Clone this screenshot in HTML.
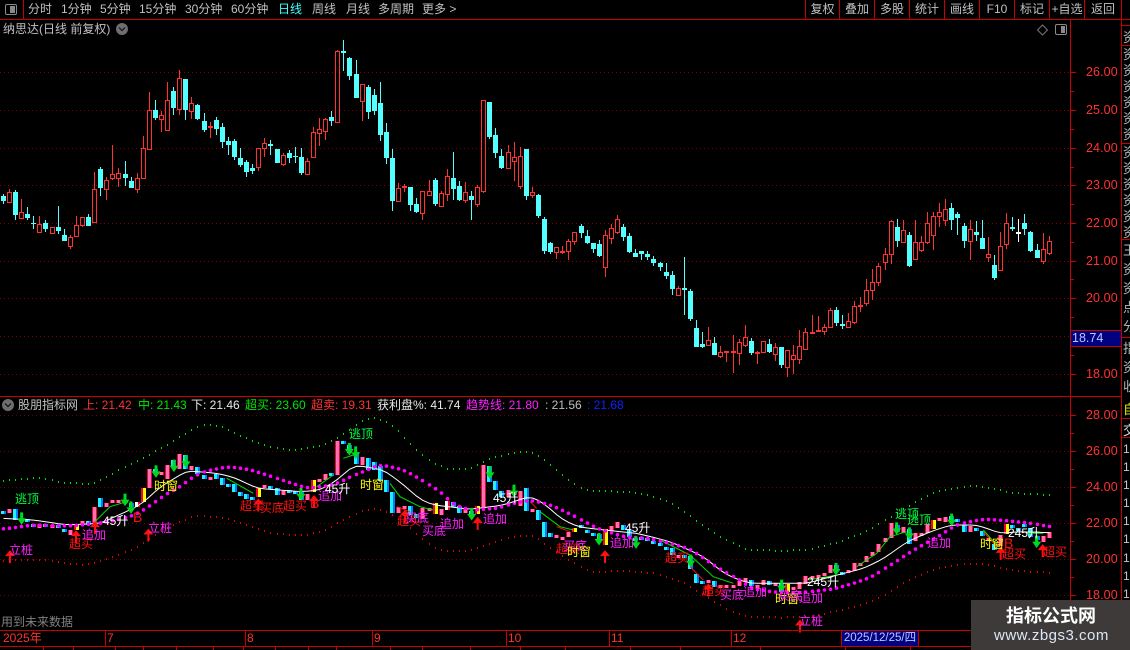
<!DOCTYPE html>
<html lang="zh"><head><meta charset="utf-8"><title>纳思达</title>
<style>
html,body{margin:0;padding:0;background:#000}
#p{position:relative;width:1130px;height:650px;overflow:hidden;background:#000;font-family:"Liberation Sans","WenQuanYi Zen Hei","Noto Sans CJK SC",sans-serif;font-size:12px;color:#c0c0c0}
.t{position:absolute;white-space:nowrap;line-height:14px}
.a{position:absolute;white-space:nowrap;line-height:14px;left:1086px;color:#ff3232;font-size:12.5px;letter-spacing:.1px}
.b{position:absolute;top:2px;text-align:center;line-height:14px;white-space:nowrap}
.r{color:#ff3232}.g{color:#00e800}.w{color:#e8e8e8}.m{color:#ff20ff}.l{color:#1020ff}
svg{position:absolute;left:0;top:0}
svg text{font-family:"Liberation Sans","WenQuanYi Zen Hei","Noto Sans CJK SC",sans-serif;font-size:12px}
.s{position:absolute;left:1123px;width:7px;overflow:hidden;white-space:nowrap;font-size:13px;color:#b8b8b8}
.s div{height:var(--h)}
#wm{position:absolute;left:971px;top:600px;width:159px;height:50px;background:#3d3a39}
</style></head><body><div id="p">
<svg width="1130" height="650" viewBox="0 0 1130 650">
<g stroke="#8a0000" stroke-width="1" stroke-dasharray="1 3" shape-rendering="crispEdges">
<path d="M0 72.5H1070M0 110.5H1070M0 148.5H1070M0 185.5H1070M0 223.5H1070M0 261.5H1070M0 298.5H1070M0 336.5H1070M0 374.5H1070"/>
<path stroke="#6a0000" d="M0 415.5H1070M0 451.5H1070M0 487.5H1070M0 523.5H1070M0 559.5H1070M0 595.5H1070"/>
</g>
<g id="tp"></g><g id="bars"></g><g id="curves"></g>
<g id="arrows"></g>
<g>
<text x="15" y="503" fill="#00ff40">逃顶</text>
<text x="9" y="554" fill="#ff20ff">立桩</text>
<text x="69" y="548" fill="#ff1010">超买</text>
<text x="82" y="539" fill="#ff20ff">追加</text>
<text x="103" y="525" fill="#fff">45升</text>
<text x="133" y="522" fill="#ff1010" style="font-size:14px">B</text>
<text x="148" y="532" fill="#ff20ff">立桩</text>
<text x="154" y="490" fill="#ffff00">时窗</text>
<text x="240" y="510" fill="#ff1010">超买</text>
<text x="260" y="512" fill="#ff1010">买底</text>
<text x="283" y="510" fill="#ff1010">超买</text>
<text x="310" y="508" fill="#ff1010" style="font-size:14px">B</text>
<text x="318" y="500" fill="#ff20ff">追加</text>
<text x="325" y="493" fill="#fff">45升</text>
<text x="349" y="438" fill="#00ff40">逃顶</text>
<text x="360" y="489" fill="#ffff00">时窗</text>
<text x="397" y="525" fill="#ff1010">超买</text>
<text x="405" y="522" fill="#ff20ff">买底</text>
<text x="422" y="535" fill="#ff20ff">买底</text>
<text x="440" y="528" fill="#ff20ff">追加</text>
<text x="493" y="502" fill="#fff">45升</text>
<text x="483" y="523" fill="#ff20ff">追加</text>
<text x="556" y="553" fill="#ff1010">超买</text>
<text x="563" y="550" fill="#ff20ff">买底</text>
<text x="567" y="556" fill="#ffff00">时窗</text>
<text x="610" y="547" fill="#ff20ff">追加</text>
<text x="625" y="532" fill="#fff">45升</text>
<text x="665" y="562" fill="#ff1010">超买</text>
<text x="702" y="595" fill="#ff1010">超买</text>
<text x="720" y="599" fill="#ff20ff">买底</text>
<text x="743" y="596" fill="#ff20ff">追加</text>
<text x="775" y="603" fill="#ffff00">时窗</text>
<text x="778" y="600" fill="#ff20ff">买底</text>
<text x="799" y="602" fill="#ff20ff">追加</text>
<text x="807" y="586" fill="#fff">245升</text>
<text x="799" y="625" fill="#ff20ff">立桩</text>
<text x="895" y="518" fill="#00ff40">逃顶</text>
<text x="907" y="524" fill="#00ff40">逃顶</text>
<text x="927" y="547" fill="#ff20ff">追加</text>
<text x="980" y="548" fill="#ffff00">时窗</text>
<text x="1004" y="548" fill="#ff1010" style="font-size:14px">B</text>
<text x="1002" y="558" fill="#ff1010">超买</text>
<text x="1008" y="537" fill="#fff">245升</text>
<text x="1043" y="556" fill="#ff1010">超买</text>
</g>
<g stroke="#c80000" stroke-width="1" shape-rendering="crispEdges" fill="none">
<path d="M0 19.5H1130M0 396.5H1121M0 630.5H971M0 646.5H971M1070.5 19V650M1121.5 0V650M23.5 0V19M805.5 0V19M839.5 0V19M874.5 0V19M909.5 0V19M944.5 0V19M979.5 0V19M1014.5 0V19M1049.5 0V19M1084.5 0V19"/>
<path d="M1122 25.5H1130M1122 45.5H1130M1122 143.5H1130M1122 239.5H1130M1122 337.5H1130M1122 418.5H1130M1122 437.5H1130"/>
<path d="M105.5 630V646M245.5 630V646M372.5 630V646M506.5 630V646M609.5 630V646M731.5 630V646"/>
<path d="M43.5 646V650M73.5 646V650M115.5 646V650M143.5 646V650M176.5 646V650M213.5 646V650M243.5 646V650M275.5 646V650M308.5 646V650M336.5 646V650M390.5 646V650M422.5 646V650M470.5 646V650M520.5 646V650M565.5 646V650M630.5 646V650M680.5 646V650M760.5 646V650M845.5 646V650M910.5 646V650"/>
<path d="M1071 72.5H1076M1071 91.5H1074M1071 110.5H1076M1071 129.5H1074M1071 148.5H1076M1071 167.5H1074M1071 185.5H1076M1071 204.5H1074M1071 223.5H1076M1071 242.5H1074M1071 261.5H1076M1071 279.5H1074M1071 298.5H1076M1071 317.5H1074M1071 336.5H1076M1071 355.5H1074M1071 374.5H1076"/>
<path d="M1071 415.5H1076M1071 433.5H1074M1071 451.5H1076M1071 469.5H1074M1071 487.5H1076M1071 505.5H1074M1071 523.5H1076M1071 541.5H1074M1071 559.5H1076M1071 577.5H1074M1071 595.5H1076"/>
</g>
<rect x="5.5" y="4.5" width="11" height="10" rx="1.5" fill="none" stroke="#8a8a8a"/><rect x="10" y="6" width="5" height="7" fill="#8a8a8a"/>
<circle cx="122" cy="29" r="6" fill="#6e6e6e"/><path d="M119 27.5l3 3 3-3" fill="none" stroke="#111" stroke-width="1.2"/>
<circle cx="8" cy="405" r="6" fill="#6e6e6e"/><path d="M5 403.5l3 3 3-3" fill="none" stroke="#111" stroke-width="1.2"/>
<path d="M1042.5 25l5 5-5 5-5-5z" fill="none" stroke="#777"/>
<rect x="1055.5" y="24.5" width="11" height="10" rx="1.5" fill="none" stroke="#8a8a8a"/><rect x="1061" y="26" width="4" height="7" fill="#8a8a8a"/>
</svg>

<span class="t" style="left:28px;top:2px">分时</span>
<span class="t" style="left:61px;top:2px">1分钟</span>
<span class="t" style="left:100px;top:2px">5分钟</span>
<span class="t" style="left:139px;top:2px">15分钟</span>
<span class="t" style="left:185px;top:2px">30分钟</span>
<span class="t" style="left:231px;top:2px">60分钟</span>
<span class="t" style="left:278px;top:2px;color:#40ffff">日线</span>
<span class="t" style="left:312px;top:2px">周线</span>
<span class="t" style="left:346px;top:2px">月线</span>
<span class="t" style="left:378px;top:2px">多周期</span>
<span class="t" style="left:422px;top:2px">更多 &gt;</span>
<span class="b" style="left:806px;width:33px">复权</span>
<span class="b" style="left:840px;width:34px">叠加</span>
<span class="b" style="left:875px;width:34px">多股</span>
<span class="b" style="left:910px;width:34px">统计</span>
<span class="b" style="left:945px;width:34px">画线</span>
<span class="b" style="left:980px;width:34px">F10</span>
<span class="b" style="left:1015px;width:34px">标记</span>
<span class="b" style="left:1050px;width:34px">+自选</span>
<span class="b" style="left:1085px;width:36px">返回</span>
<span class="t" style="left:3px;top:22px">纳思达(日线 前复权)</span>

<span class="a" style="top:65px">26.00</span>
<span class="a" style="top:103px">25.00</span>
<span class="a" style="top:141px">24.00</span>
<span class="a" style="top:178px">23.00</span>
<span class="a" style="top:216px">22.00</span>
<span class="a" style="top:254px">21.00</span>
<span class="a" style="top:291px">20.00</span>
<span class="a" style="top:367px">18.00</span>
<div style="position:absolute;left:1071px;top:330px;width:50px;height:15px;background:#000080;border-top:1px solid #c80000;border-bottom:1px solid #c80000"></div>
<span class="t" style="left:1072px;top:331px;color:#b8c8ff;font-size:12.5px">18.74</span>

<span class="a" style="top:408px">28.00</span>
<span class="a" style="top:444px">26.00</span>
<span class="a" style="top:480px">24.00</span>
<span class="a" style="top:516px">22.00</span>
<span class="a" style="top:552px">20.00</span>
<span class="a" style="top:588px">18.00</span>

<div class="s" style="top:27px;--h:16px">资</div>
<div class="s" style="top:47px;--h:16px;line-height:16px"><div>资</div><div>资</div><div>资</div><div>资</div><div>资</div><div>资</div></div>
<div class="s" style="top:145px;--h:16px;line-height:16px"><div>资</div><div>资</div><div>资</div><div>资</div><div>资</div><div>资</div></div>
<div class="s" style="top:241px;--h:19px;line-height:19px"><div>王</div><div>资</div><div>资</div><div>点</div><div>分</div></div>
<div class="s" style="top:339px;--h:19px;line-height:19px"><div>指</div><div>资</div><div>收</div></div>
<div class="s" style="top:399px;color:#e8e800">自</div>
<div class="s" style="top:420px;color:#d8d8d8">交</div>
<div class="s" style="top:440px;--h:18.1px;line-height:18px;font-size:12px;color:#c8c8c8"><div>1</div><div>1</div><div>1</div><div>1</div><div>1</div><div>1</div><div>1</div><div>1</div><div>1</div></div>

<span class="t" style="left:18px;top:398px">股朋指标网</span>
<span class="t r" style="left:83px;top:398px">上: 21.42</span>
<span class="t g" style="left:138px;top:398px">中: 21.43</span>
<span class="t w" style="left:191px;top:398px">下: 21.46</span>
<span class="t g" style="left:245px;top:398px">超买: 23.60</span>
<span class="t r" style="left:311px;top:398px">超卖: 19.31</span>
<span class="t w" style="left:377px;top:398px">获利盘%: 41.74</span>
<span class="t m" style="left:466px;top:398px">趋势线: 21.80</span>
<span class="t" style="left:545px;top:398px">: 21.56</span>
<span class="t l" style="left:587px;top:398px">: 21.68</span>

<span class="t" style="left:1px;top:615px;color:#808080">用到未来数据</span>

<span class="t r" style="left:3px;top:631px">2025年</span>
<span class="t r" style="left:107px;top:631px">7</span>
<span class="t r" style="left:247px;top:631px">8</span>
<span class="t r" style="left:374px;top:631px">9</span>
<span class="t r" style="left:508px;top:631px">10</span>
<span class="t r" style="left:611px;top:631px">11</span>
<span class="t r" style="left:733px;top:631px">12</span>
<span class="t" style="left:841px;top:631px;width:76px;height:15px;background:#000080;color:#b8c8ff;border-left:1px solid #c80000;border-right:1px solid #c80000;text-align:center;font-size:11.5px">2025/12/25/四</span>

<div id="wm">
<span class="t" style="left:35px;top:3px;line-height:24px;font-size:18px;font-weight:bold;color:#fff;font-family:'Noto Sans CJK SC',sans-serif">指标公式网</span>
<span class="t" style="left:23px;top:27px;line-height:18px;font-size:15px;color:#dbe7f7;letter-spacing:.5px">www.zbgs3.com</span>
</div>
</div>
<script>
var D=[[1,194,196,201,204],[0,189,192,202,202],[1,190,192,215,220],[0,199,212,218,218],[1,207,214,218,220],[1,216,223,224,229],[0,216,224,232,232],[1,220,223,229,232],[0,227,227,233,233],[1,206,227,231,234],[1,229,235,241,241],[0,235,237,246,249],[0,216,225,236,236],[0,217,217,225,227],[1,214,217,226,226],[0,172,189,222,222],[1,167,169,188,196],[0,177,180,189,200],[0,145,174,178,180],[0,168,173,178,187],[1,161,174,178,186],[1,177,181,188,188],[0,173,178,189,193],[0,136,148,178,178],[0,92,110,149,150],[1,100,110,118,120],[0,111,115,119,132],[0,82,100,130,131],[1,87,91,108,115],[0,70,78,109,115],[1,79,79,110,120],[0,97,103,111,119],[1,104,105,119,120],[1,113,121,130,132],[0,122,126,127,138],[1,117,120,129,135],[1,123,127,142,148],[1,137,141,145,155],[1,139,141,157,160],[1,148,158,165,167],[1,160,162,172,177],[1,164,168,171,174],[0,148,148,167,171],[0,138,143,148,157],[1,140,144,146,155],[1,149,149,163,163],[0,153,155,164,166],[1,150,153,158,163],[1,147,156,157,163],[1,148,157,173,175],[0,158,161,174,174],[0,127,132,157,158],[0,118,129,133,146],[0,118,119,131,140],[1,111,117,121,126],[0,50,51,122,123],[1,40,51,53,71],[1,57,58,76,80],[1,60,74,98,98],[0,84,84,101,121],[1,85,87,112,119],[1,89,95,111,115],[1,82,103,135,141],[1,123,132,158,164],[1,149,158,201,211],[0,183,188,201,202],[0,184,186,188,192],[1,187,187,205,211],[1,198,204,212,213],[0,191,191,213,220],[0,180,191,195,196],[1,178,180,204,206],[0,191,193,206,206],[0,169,176,194,201],[1,152,178,189,200],[1,181,186,200,201],[0,182,192,200,203],[1,191,196,200,220],[0,185,187,204,207],[0,100,100,191,193],[1,102,102,137,139],[1,128,135,153,158],[1,149,156,168,169],[0,145,152,168,169],[0,142,157,161,181],[0,147,156,186,189],[1,149,149,196,200],[0,187,192,195,198],[1,194,195,216,218],[1,217,219,251,254],[1,242,243,252,254],[0,247,247,252,259],[0,246,251,252,254],[0,239,241,251,260],[0,232,232,241,245],[1,224,226,233,238],[1,230,236,243,244],[1,243,243,249,253],[1,240,244,256,257],[0,230,235,267,277],[0,224,228,238,244],[0,215,219,232,234],[1,224,227,237,241],[1,233,236,252,253],[1,249,253,257,257],[1,251,251,254,260],[1,251,254,257,260],[1,256,259,263,266],[1,262,263,267,271],[1,263,272,276,279],[1,271,275,289,295],[0,286,288,295,295],[1,257,288,290,315],[1,289,291,319,321],[1,320,328,347,347],[1,332,344,347,348],[0,327,340,345,346],[1,337,343,355,355],[0,346,352,356,358],[0,351,351,353,362],[0,335,351,353,373],[0,339,342,353,365],[0,325,337,345,347],[1,338,341,353,355],[0,351,352,353,364],[0,341,341,352,352],[1,339,344,352,353],[0,343,347,354,361],[1,347,347,365,368],[0,350,350,367,377],[0,345,355,359,374],[0,330,346,359,364],[0,328,332,349,349],[0,315,332,334,334],[0,316,330,332,332],[0,324,327,331,335],[0,308,310,327,328],[1,307,310,323,326],[1,315,324,326,329],[0,313,321,327,328],[0,301,306,322,324],[0,297,305,306,312],[0,279,290,303,306],[0,269,282,290,300],[0,263,266,282,286],[0,248,254,262,270],[0,220,221,254,264],[1,219,227,241,247],[0,220,230,242,242],[1,232,235,266,267],[0,220,242,259,260],[0,236,242,250,252],[0,212,223,242,244],[0,212,216,235,250],[0,203,212,216,227],[0,199,209,220,226],[1,203,208,220,230],[1,212,214,218,235],[1,223,226,241,248],[0,220,229,241,260],[1,221,232,235,241],[1,220,238,249,249],[0,237,254,257,262],[1,255,265,278,280],[0,232,246,270,271],[0,213,223,244,249],[1,217,227,229,231],[2,219,232,233,242],[1,214,223,229,235],[1,231,232,251,252],[1,244,250,258,258],[0,233,249,261,264],[0,236,241,253,255]];
var X=function(i){return Math.round(2.9+6.08*i)};
var tpS='',bars='';
var SP={12:1,22:2,23:1,42:1,51:1,71:1,73:2,78:1,94:1,99:1,129:1,153:1,165:1};
var M=function(y){return 451.5+(y-72.5)*.4787};
var R=function(x,y,w,h,f){return '<rect x="'+x+'" y="'+y+'" width="'+w+'" height="'+h+'" fill="'+f+'"/>'};
D.forEach(function(d,i){
 var x=X(i),t=d[0],h=d[1],a=d[2],b=d[3],l=d[4];
 var col=t==0?'#ff3232':t==1?'#54ffff':'#ffffff';
 if(h<l)tpS+=R(x,h,1,l-h,col);
 if(t==0&&b-a>2){tpS+=R(x-2,a,5,b-a+1,'#ff3232')+R(x-1,a+1,3,b-a-1,'#000');}
 else if(t==0){tpS+=R(x-2,a,5,Math.max(b-a,2),col);}
 else{tpS+=R(x-2,a,5,Math.max(b-a,1)+(t==2?1:0),col);}
 var ya=Math.round(M(a)),yb=Math.round(M(b)),hh=Math.max(yb-ya,3);
 var s=SP[i];
 if(s==1){bars+=R(x-2,ya,2,hh,'#f00030')+R(x,ya,3,hh,'#ffff00');}
 else if(s==2){bars+=R(x-2,ya,5,hh,'#ffffff')+R(x+1,ya,2,hh,'#f00030');}
 else if(t==0){bars+=R(x-2,ya,5,hh,'#e8003c')+R(x-1,ya,3,hh,'#ff70b0');}
 else{bars+=R(x-2,ya,3,hh,'#20f0ff')+R(x+1,ya,2,hh,'#0080ff');}
});
document.getElementById('tp').innerHTML='<g shape-rendering="crispEdges">'+tpS+'</g>';
document.getElementById('bars').innerHTML='<g shape-rendering="crispEdges">'+bars+'</g>';
function P(s){var o=[];s.forEach(function(g){var a=g[1];for(var i=0;i<a.length;i+=2)o.push([a[i]/3+g[0],a[i+1]/3+390]);});o.sort(function(p,q){return p[0]-q[0]});return o}
function V(p,x){if(x<=p[0][0])return p[0][1];for(var i=1;i<p.length;i++){if(x<=p[i][0]){var f=(x-p[i-1][0])/(p[i][0]-p[i-1][0]||1);return p[i-1][1]+f*(p[i][1]-p[i-1][1]);}}return p[p.length-1][1]}
function S(p,x){return (V(p,x-6)+2*V(p,x)+V(p,x+6))/4}
var mg=P([[0,[10,417,100,405,200,408,300,400,390,380,430,360,500,310,540,290,575,262,610,245,680,230,740,237,800,255,850,272,920,295,1000,285,1050,260,1090,245,1130,225]],[370,[50,228,100,240,150,268,210,305,250,345,300,360,380,355,430,340,480,330,540,345,600,372,680,415,760,440,830,445,900,460,960,478,1030,525,1070,550,1110,570]],[750,[0,595,60,605,130,610,250,597,310,580,365,560,440,512,490,480,570,435,620,403,700,387,780,393,860,402,893,410]]]);
var gr=P([[0,[5,270,130,260,180,275,280,280,340,245,430,200,520,150,600,100,660,105,720,135,800,165,860,178,940,170,1000,150,1040,120,1100,80]],[370,[20,82,60,95,120,160,170,205,230,235,300,235,350,205,430,185,480,180,520,205,590,265,650,300,760,302,830,310,900,335,980,390,1050,440,1140,480]],[750,[15,477,100,480,180,475,260,455,340,425,420,380,490,335,560,300,650,285,710,288,780,305,890,312]]]);
var rd=P([[0,[5,510,130,505,190,518,260,522,340,498,420,465,480,420,580,375,660,378,720,395,800,425,900,435,970,420,1040,380,1100,355]],[370,[10,353,50,360,110,400,160,450,210,480,290,482,350,460,430,438,490,432,530,465,600,510,670,545,760,538,860,548,940,575,1060,650,1130,680]],[750,[15,677,90,680,170,678,260,660,340,640,400,615,470,570,550,535,650,518,700,520,800,540,890,545]]]);
var wh=P([[0,[10,385,100,390,200,405,300,400,420,345,480,290,560,242,650,250,700,262,770,295,900,305,960,300,1010,270,1060,225]],[370,[40,240,100,285,150,330,190,345,300,358,400,345,480,318,520,340,570,385,620,410,700,420,800,430,900,455,1000,500,1060,550,1100,568]],[750,[0,580,170,580,260,555,340,535,400,505,470,455,540,425,600,405,680,405,750,430,800,425,890,428]]]);
var cv='',pts='';
for(var i=0;i<=172;i++){var x=X(i);
 cv+='<rect x="'+x+'" y="'+Math.round(S(gr,x))+'" width="1" height="2" fill="#00e000" shape-rendering="crispEdges"/>';
 cv+='<rect x="'+x+'" y="'+Math.round(S(rd,x))+'" width="1" height="2" fill="#e00000" shape-rendering="crispEdges"/>';
 pts+=(x+.5)+','+S(wh,x).toFixed(1)+' ';
}
var gl=[[0,[280,400,330,350,380,335]],[0,[680,265,760,310]],[0,[950,290,1000,255]],[0,[1030,205,1060,195]],[370,[60,280,90,320,150,350,190,360]],[370,[510,365,570,410,610,420]],[370,[870,450,960,495,1030,560,1090,580]],[750,[175,570,260,555]],[750,[320,530,380,490,420,440,470,425]],[750,[700,420,740,465]],[750,[830,430,880,430]]];
var rl=[[370,[480,335,500,355]],[370,[560,410,600,425]],[370,[80,350,120,365]],[370,[960,530,1000,570]],[750,[700,425,740,470]]];
var lines='';
function pl(g,c){var a=g[1],s='';for(var i=0;i<a.length;i+=2)s+=(a[i]/3+g[0]).toFixed(1)+','+(a[i+1]/3+390).toFixed(1)+' ';return '<polyline points="'+s+'" fill="none" stroke="'+c+'" stroke-width="1"/>'}
gl.forEach(function(g){lines+=pl(g,'#00e000')});rl.forEach(function(g){lines+=pl(g,'#ff1010')});
cv+=lines+'<polyline points="'+pts+'" fill="none" stroke="#fff" stroke-width="1"/>';
for(var i=0;i<=172;i++){var x=X(i);cv+='<circle cx="'+(x+.5)+'" cy="'+S(mg,x).toFixed(1)+'" r="1.8" fill="#ff00ff"/>';}
document.getElementById('curves').innerHTML=cv;
var dn=[[0,65,388],[0,375,332],[0,393,355],[0,468,247],[0,522,230],[0,558,217],[0,903,315],[0,1048,180],[0,1067,190],[370,360,250],[370,432,305],[370,305,375],[370,687,450],[370,798,460],[370,962,515],[750,95,590],[750,258,540],[750,440,418],[750,478,433],[750,605,392],[750,860,458]];
var up=[[0,30,500],[0,228,440],[0,285,413],[0,445,435],[0,775,345],[0,942,335],[370,105,378],[370,323,400],[370,705,500],[370,1015,600],[750,150,708],[750,752,490],[750,878,482]];
var ar='';
dn.forEach(function(a){var x=a[1]/3+a[0],y=a[2]/3+390;ar+='<path d="M'+(x-1.5)+' '+(y-7)+'h3v6h3l-4.500 6.500-4.500-6.500h3z" fill="#00d820"/>'});
up.forEach(function(a){var x=a[1]/3+a[0],y=a[2]/3+390;ar+='<path d="M'+x+' '+(y-6.5)+'l5 6h-4v7h-2v-7h-4z" fill="#ff1010"/>'});
document.getElementById('arrows').innerHTML=ar;
</script>
</body></html>
